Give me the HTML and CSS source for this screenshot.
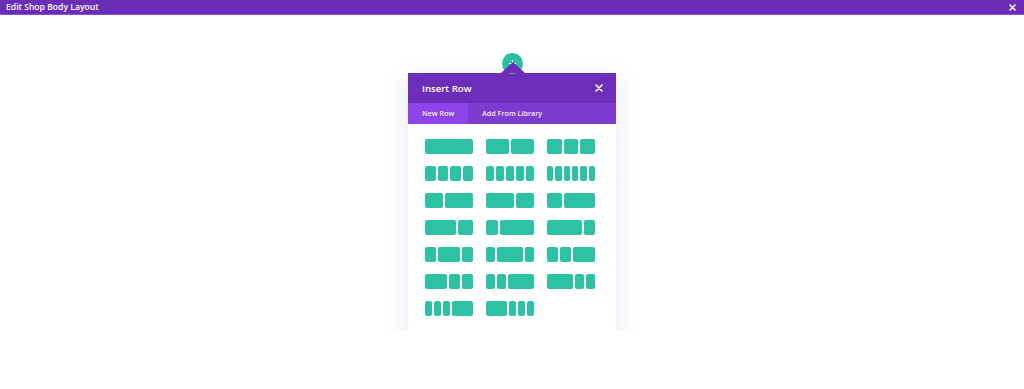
FILE: index.html
```html
<!DOCTYPE html>
<html>
<head>
<meta charset="utf-8">
<link rel="stylesheet" href="styles.css">
</head>
<body>
<header class="topbar">
  <span class="topbar-title">Edit Shop Body Layout</span>
  <svg class="topbar-close" width="7" height="7" viewBox="0 0 7 7"><path d="M1 1L6 6M6 1L1 6" stroke="#fff" stroke-width="1.6" stroke-linecap="round"/></svg>
</header>
<main class="stage">
  <div class="modal">
    <div class="add-btn"><span class="plus"></span></div>
    <div class="arrow"></div>
    <div class="modal-head">
      <span class="modal-title">Insert Row</span>
      <svg class="modal-close" width="8" height="8" viewBox="0 0 8 8"><path d="M1 1L7 7M7 1L1 7" stroke="#fff" stroke-width="1.6" stroke-linecap="round"/></svg>
    </div>
    <div class="tabs">
      <span class="tab active">New Row</span>
      <span class="tab">Add From Library</span>
    </div>
    <div class="layouts">
      <div class="lay"><i class="c4"></i></div>
      <div class="lay"><i class="c2"></i><i class="c2"></i></div>
      <div class="lay"><i class="c1"></i><i class="c1"></i><i class="c1"></i></div>

      <div class="lay"><i class="c1"></i><i class="c1"></i><i class="c1"></i><i class="c1"></i></div>
      <div class="lay"><i class="c1"></i><i class="c1"></i><i class="c1"></i><i class="c1"></i><i class="c1"></i></div>
      <div class="lay"><i class="c1"></i><i class="c1"></i><i class="c1"></i><i class="c1"></i><i class="c1"></i><i class="c1"></i></div>

      <div class="lay"><i class="c2"></i><i class="c3"></i></div>
      <div class="lay"><i class="c3"></i><i class="c2"></i></div>
      <div class="lay"><i class="c1"></i><i class="c2"></i></div>

      <div class="lay"><i class="c2"></i><i class="c1"></i></div>
      <div class="lay"><i class="c1"></i><i class="c3"></i></div>
      <div class="lay"><i class="c3"></i><i class="c1"></i></div>

      <div class="lay"><i class="c1"></i><i class="c2"></i><i class="c1"></i></div>
      <div class="lay"><i class="c1"></i><i class="c3"></i><i class="c1"></i></div>
      <div class="lay"><i class="c1"></i><i class="c1"></i><i class="c2"></i></div>

      <div class="lay"><i class="c2"></i><i class="c1"></i><i class="c1"></i></div>
      <div class="lay"><i class="c1"></i><i class="c1"></i><i class="c3"></i></div>
      <div class="lay"><i class="c3"></i><i class="c1"></i><i class="c1"></i></div>

      <div class="lay"><i class="c1"></i><i class="c1"></i><i class="c1"></i><i class="c3"></i></div>
      <div class="lay"><i class="c3"></i><i class="c1"></i><i class="c1"></i><i class="c1"></i></div>
    </div>
  </div>
</main>
</body>
</html>
```
FILE: styles.css
```css
html, body {
  margin: 0;
  padding: 0;
  background: #ffffff;
  font-family: "Open Sans", "Noto Sans", sans-serif;
}

.topbar {
  height: 14px;
  background: #6b2db8;
  border-bottom: 1px solid #8c4fd8;
  display: flex;
  align-items: center;
  justify-content: space-between;
  padding: 0 8px 0 6px;
}

.topbar-title {
  color: #ffffff;
  font-size: 8.6px;
  font-weight: 600;
  line-height: 14px;
}

.topbar-close {
  display: block;
}

.stage {
  display: flex;
  justify-content: center;
  padding-top: 58px;
}

.modal {
  position: relative;
  width: 208px;
  background: #ffffff;
  box-shadow: 0 6px 22px rgba(60, 110, 220, 0.18);
}

.add-btn {
  position: absolute;
  left: 94px;
  top: -20px;
  width: 21px;
  height: 21px;
  border-radius: 50%;
  background: #2bc0a2;
  display: flex;
  align-items: center;
  justify-content: center;
}

.plus {
  position: relative;
  width: 7px;
  height: 7px;
}

.plus::before, .plus::after {
  content: "";
  position: absolute;
  background: #ffffff;
}

.plus::before {
  left: 3px;
  top: 0;
  width: 1.4px;
  height: 7px;
}

.plus::after {
  left: 0;
  top: 3px;
  width: 7px;
  height: 1.4px;
}

.arrow {
  position: absolute;
  left: 93px;
  top: -11px;
  width: 0;
  height: 0;
  border-left: 12px solid transparent;
  border-right: 12px solid transparent;
  border-bottom: 11px solid #6c2eb9;
}

.modal-head {
  height: 30px;
  background: #6c2eb9;
  display: flex;
  align-items: center;
  justify-content: space-between;
  padding: 0 13px 0 14px;
}

.modal-title {
  color: #ffffff;
  font-size: 9.6px;
  font-weight: 600;
}

.modal-close {
  display: block;
}

.tabs {
  height: 21px;
  background: #7d3bd0;
  display: flex;
}

.tab {
  color: #f3ecfc;
  font-size: 7.2px;
  font-weight: 600;
  line-height: 21px;
  padding: 0 13px 0 14px;
}

.tab.active {
  background: #8d44ea;
  width: 33px;
}

.layouts {
  display: grid;
  grid-template-columns: repeat(3, 48px);
  column-gap: 13px;
  row-gap: 12px;
  padding: 15px 21px 15px 17px;
}

.lay {
  height: 15px;
  display: flex;
  gap: 2px;
}

.lay i {
  display: block;
  background: #2cc2a3;
  border-radius: 2px;
  flex-basis: 0;
  flex-shrink: 1;
}

.lay .c1 { flex-grow: 1; }
.lay .c2 { flex-grow: 2; }
.lay .c3 { flex-grow: 3; }
.lay .c4 { flex-grow: 4; }
```
